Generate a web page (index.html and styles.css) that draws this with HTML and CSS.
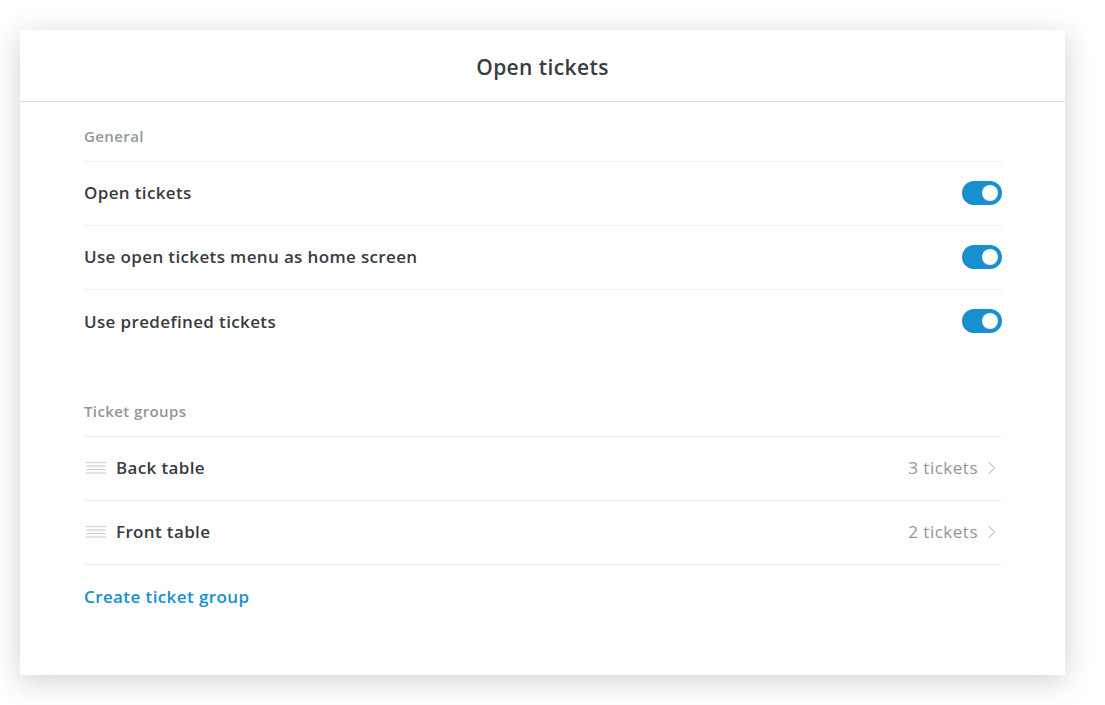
FILE: index.html
```html
<!DOCTYPE html>
<html>
<head>
<meta charset="utf-8">
<link rel="stylesheet" href="styles.css">
</head>
<body>
<div class="card">
  <header class="header"><h1 class="title">Open tickets</h1></header>
  <main class="content">
    <section class="section">
      <div class="section-label">General</div>
      <div class="row">
        <span class="row-label">Open tickets</span>
        <span class="toggle"><span class="knob"></span></span>
      </div>
      <div class="row">
        <span class="row-label">Use open tickets menu as home screen</span>
        <span class="toggle"><span class="knob"></span></span>
      </div>
      <div class="row no-border">
        <span class="row-label">Use predefined tickets</span>
        <span class="toggle"><span class="knob"></span></span>
      </div>
    </section>
    <section class="section groups">
      <div class="section-label">Ticket groups</div>
      <div class="row">
        <span class="row-left">
          <svg class="handle" width="20" height="14" viewBox="0 0 20 14"><g stroke="#cfd1d3" stroke-width="1.2"><line x1="0" y1="1.5" x2="20" y2="1.5"/><line x1="0" y1="5" x2="20" y2="5"/><line x1="0" y1="8.5" x2="20" y2="8.5"/><line x1="0" y1="12" x2="20" y2="12"/></g></svg>
          <span class="row-label">Back table</span>
        </span>
        <span class="row-right"><span class="count">3 tickets</span>
          <svg class="chev" width="9" height="14" viewBox="0 0 9 14"><path d="M1.5 1 L7.5 7 L1.5 13" fill="none" stroke="#c9cccf" stroke-width="1.4"/></svg>
        </span>
      </div>
      <div class="row">
        <span class="row-left">
          <svg class="handle" width="20" height="14" viewBox="0 0 20 14"><g stroke="#cfd1d3" stroke-width="1.2"><line x1="0" y1="1.5" x2="20" y2="1.5"/><line x1="0" y1="5" x2="20" y2="5"/><line x1="0" y1="8.5" x2="20" y2="8.5"/><line x1="0" y1="12" x2="20" y2="12"/></g></svg>
          <span class="row-label">Front table</span>
        </span>
        <span class="row-right"><span class="count">2 tickets</span>
          <svg class="chev" width="9" height="14" viewBox="0 0 9 14"><path d="M1.5 1 L7.5 7 L1.5 13" fill="none" stroke="#c9cccf" stroke-width="1.4"/></svg>
        </span>
      </div>
      <div class="row no-border">
        <a class="link" href="#">Create ticket group</a>
      </div>
    </section>
  </main>
</div>
</body>
</html>
```
FILE: styles.css
```css
* { box-sizing: border-box; }
html, body { margin: 0; padding: 0; background: #ffffff; }
body {
  font-family: "Open Sans", "Liberation Sans", sans-serif;
  color: #373c42;
  padding: 30px 40px 30px 20px;
  -webkit-font-smoothing: antialiased;
}
.card {
  width: 1045px;
  height: 645px;
  background: #fff;
  box-shadow: 0 6px 28px rgba(0,0,0,0.18);
}
.header {
  height: 72px;
  border-bottom: 1px solid #d9dbdd;
  display: flex;
  align-items: center;
  justify-content: center;
}
.title {
  margin: 0;
  font-size: 21px;
  font-weight: 600;
  letter-spacing: 0.4px;
  color: #373c42;
  padding-top: 3px;
}
.content {
  padding: 0 63px 0 64px;
}
.section-label {
  height: 60px;
  padding-top: 24px;
  font-size: 15px;
  font-weight: 600;
  letter-spacing: 0.4px;
  color: #8f969c;
  border-bottom: 1px solid #eeeff0;
}
.groups .section-label { height: 83px; padding-top: 47px; }
.row {
  height: 64px;
  display: flex;
  align-items: center;
  justify-content: space-between;
  border-bottom: 1px solid #eeeff0;
  padding-bottom: 2px;
}
.row.no-border { border-bottom: none; }
.row-label {
  font-size: 17px;
  font-weight: 600;
  letter-spacing: 0.36px;
}
.row-left { display: flex; align-items: center; gap: 10px; }
.handle { margin-left: 2px; margin-top: 1px; }
.row-right { display: flex; align-items: center; gap: 9px; margin-right: 6px; }
.count { font-size: 17px; color: #8f969c; letter-spacing: 0.5px; }
.toggle {
  width: 40px;
  height: 24px;
  border-radius: 12px;
  background: #1690cf;
  display: flex;
  align-items: center;
  justify-content: flex-end;
  padding-right: 4px;
}
.knob {
  width: 16px;
  height: 16px;
  border-radius: 50%;
  background: #fff;
}
.link {
  font-size: 17px;
  font-weight: 600;
  letter-spacing: 0.4px;
  color: #1690cf;
  text-decoration: none;
}
```
